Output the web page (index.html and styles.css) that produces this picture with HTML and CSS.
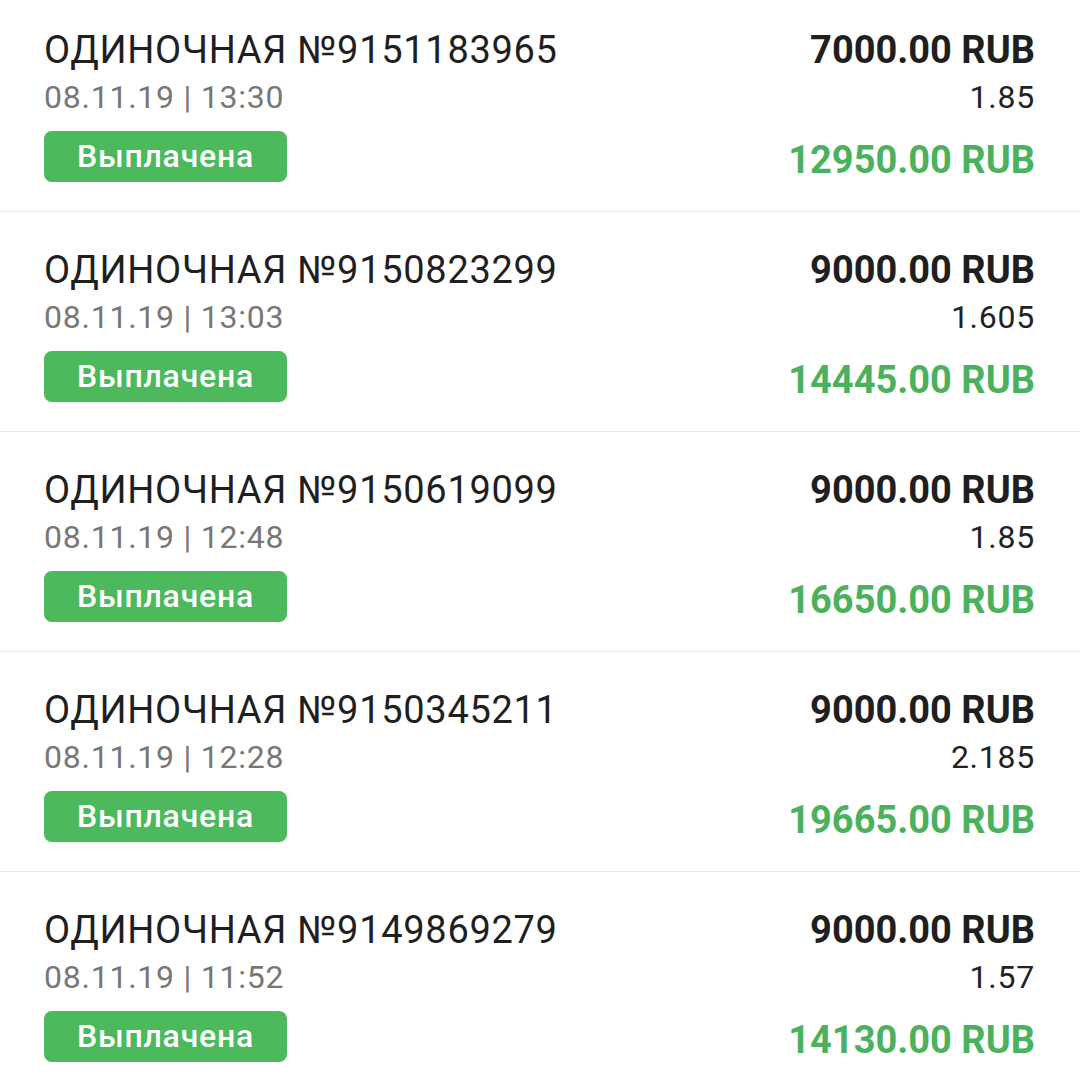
FILE: index.html
```html
<!DOCTYPE html>
<html lang="ru">
<head>
<meta charset="utf-8">
<title>Ставки</title>
<link rel="stylesheet" href="styles.css">
</head>
<body>
<ul class="list">
  <li class="row">
    <div class="left">
      <div class="title">ОДИНОЧНАЯ №9151183965</div>
      <div class="date">08.11.19 | 13:30</div>
      <span class="badge">Выплачена</span>
    </div>
    <div class="right">
      <div class="stake">7000.00 RUB</div>
      <div class="odds">1.85</div>
      <div class="win">12950.00 RUB</div>
    </div>
  </li>
  <li class="row">
    <div class="left">
      <div class="title">ОДИНОЧНАЯ №9150823299</div>
      <div class="date">08.11.19 | 13:03</div>
      <span class="badge">Выплачена</span>
    </div>
    <div class="right">
      <div class="stake">9000.00 RUB</div>
      <div class="odds">1.605</div>
      <div class="win">14445.00 RUB</div>
    </div>
  </li>
  <li class="row">
    <div class="left">
      <div class="title">ОДИНОЧНАЯ №9150619099</div>
      <div class="date">08.11.19 | 12:48</div>
      <span class="badge">Выплачена</span>
    </div>
    <div class="right">
      <div class="stake">9000.00 RUB</div>
      <div class="odds">1.85</div>
      <div class="win">16650.00 RUB</div>
    </div>
  </li>
  <li class="row">
    <div class="left">
      <div class="title">ОДИНОЧНАЯ №9150345211</div>
      <div class="date">08.11.19 | 12:28</div>
      <span class="badge">Выплачена</span>
    </div>
    <div class="right">
      <div class="stake">9000.00 RUB</div>
      <div class="odds">2.185</div>
      <div class="win">19665.00 RUB</div>
    </div>
  </li>
  <li class="row">
    <div class="left">
      <div class="title">ОДИНОЧНАЯ №9149869279</div>
      <div class="date">08.11.19 | 11:52</div>
      <span class="badge">Выплачена</span>
    </div>
    <div class="right">
      <div class="stake">9000.00 RUB</div>
      <div class="odds">1.57</div>
      <div class="win">14130.00 RUB</div>
    </div>
  </li>
</ul>
</body>
</html>
```

FILE: styles.css
```css
html, body {
  margin: 0;
  padding: 0;
  background: #ffffff;
}

body {
  font-family: Roboto, "Noto Sans", "Liberation Sans", sans-serif;
  color: #212121;
  overflow: hidden;
}

.list {
  list-style: none;
  margin: 0;
  padding: 0;
}

.row {
  display: flex;
  justify-content: space-between;
  align-items: flex-start;
  padding: 35px 45px 28px 44px;
  height: 156px;
  border-bottom: 1px solid #e6e6e6;
}

.row:first-child {
  padding-top: 27px;
}

.left {
  display: flex;
  flex-direction: column;
  align-items: flex-start;
}

.title {
  font-size: 38px;
  line-height: 46px;
  font-weight: 400;
  letter-spacing: 0.7px;
  color: #1f1f1f;
}

.date {
  font-size: 32px;
  line-height: 48px;
  letter-spacing: 0.75px;
  color: #777777;
}

.badge {
  display: block;
  margin-top: 10px;
  width: 243px;
  height: 51px;
  line-height: 51px;
  text-align: center;
  font-size: 32px;
  font-weight: 500;
  letter-spacing: 0.8px;
  color: #ffffff;
  background: #4cb95d;
  border-radius: 8px;
}

.right {
  display: flex;
  flex-direction: column;
  align-items: flex-end;
  text-align: right;
}

.stake {
  font-size: 38px;
  line-height: 46px;
  font-weight: 700;
  color: #1f1f1f;
}

.odds {
  font-size: 32px;
  line-height: 48px;
  letter-spacing: 0.75px;
  color: #222222;
}

.win {
  margin-top: 12px;
  font-size: 38px;
  line-height: 54px;
  font-weight: 700;
  color: #4cb15d;
}
```
